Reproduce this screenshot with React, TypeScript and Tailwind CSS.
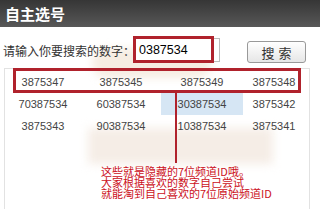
import React from 'react';

const rows = [
  ['3875347', '3875345', '3875349', '3875348'],
  ['70387534', '60387534', '30387534', '3875342'],
  ['3875343', '90387534', '10387534', '3875341'],
];

const cjk = { fontFamily: '"Noto Sans CJK SC", "Liberation Sans", sans-serif' };
const latin = { fontFamily: '"Liberation Sans", Arial, sans-serif' };

export default function App() {
  return (
    <div className="relative w-[320px] h-[209px] overflow-hidden bg-white">
      {/* faint watermark behind the content */}
      <div className="absolute left-[92px] top-[48px] w-[120px] h-[30px] rounded-full bg-[#f6ede2] blur-[4px]" />
      <div className="absolute left-[88px] top-[128px] w-[185px] h-[36px] bg-[#f5ede6] blur-[5px]" />

      {/* header */}
      <div className="relative h-[27px] bg-gradient-to-b from-[#363636] to-[#585858] flex items-center pl-[5px]">
        <span className="text-white text-[15px] font-bold leading-none" style={cjk}>自主选号</span>
      </div>

      {/* search row */}
      <div className="relative flex items-start h-[41px]">
        <span className="ml-[3px] mt-[15px] text-[12px] leading-[17px] text-[#333]" style={cjk}>
          请输入你要搜索的数字：
        </span>
        <div className="mt-[11px] h-[24px] w-[85px] border border-[#bbb] bg-white flex items-center pl-[3px]">
          <span className="text-[12.5px] text-black leading-none" style={latin}>0387534</span>
        </div>
        <button className="ml-[27px] mt-[14px] w-[59px] h-[22px] rounded-[3px] border border-[#999] bg-gradient-to-b from-white to-[#e6e6e6] text-[13px] text-[#333] leading-none tracking-[4px] pl-[4px]" style={cjk}>
          搜索
        </button>
      </div>

      {/* result table */}
      <div className="relative ml-[4px] w-[306px] h-[141px] border-l border-r border-t border-[#e2e2e2] pt-[2px]">
        {rows.map((row, i) => (
          <div key={i} className="grid grid-cols-[76px_80px_82px_62px] h-[22px]">
            {row.map((n, j) => (
              <div
                key={j}
                className={`flex items-center justify-center text-[11px] text-[#444] ${i === 1 && j === 2 ? 'bg-[#d6e6f4]' : ''}`}
                style={latin}
              >
                {n}
              </div>
            ))}
          </div>
        ))}
        <p className="relative ml-[96px] mt-[29px] text-[11px] leading-[11px] text-[#cc1122]" style={cjk}>
          这些就是隐藏的7位频道ID哦。<br />
          大家根据喜欢的数字自己尝试<br />
          就能淘到自己喜欢的7位原始频道ID
        </p>
      </div>

      {/* annotations */}
      <div className="absolute left-[133px] top-[36px] w-[81px] h-[27px] border-[3px] border-[#b0222c]" />
      <div className="absolute left-[13px] top-[68px] w-[288px] h-[25px] border-[3px] border-[#b0222c]" />
      <div className="absolute left-[175px] top-[93px] w-[1.5px] h-[70px] bg-[#b0222c]" />
    </div>
  );
}
